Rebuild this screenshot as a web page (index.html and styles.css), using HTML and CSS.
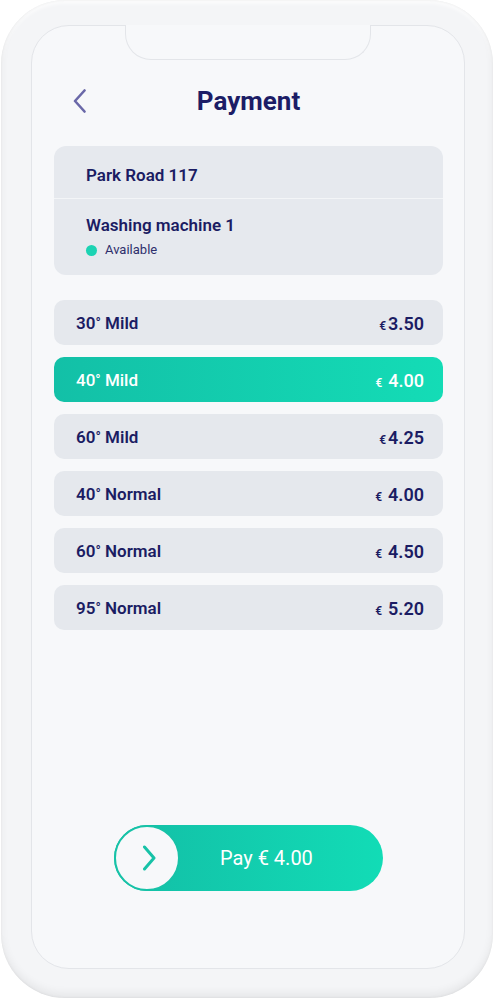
FILE: index.html
```html
<!DOCTYPE html>
<html lang="en">
<head>
<meta charset="utf-8">
<title>Payment</title>
<link rel="stylesheet" href="styles.css">
</head>
<body>
<div class="phone">
  <div class="screen">
    <div class="notch"></div>
    <header class="header">
      <div class="back">
        <svg width="14" height="24" viewBox="0 0 14 24"><path d="M11.5 1.5 L2 12 L11.5 22.5" fill="none" stroke="#6a68a8" stroke-width="2.6" stroke-linecap="round" stroke-linejoin="round"/></svg>
      </div>
      <h1 class="title">Payment</h1>
      <div></div>
    </header>

    <section class="info-card">
      <div class="info-row info-location">Park Road 117</div>
      <div class="info-row info-machine">
        <div class="machine-name">Washing machine 1</div>
        <div class="status"><span class="status-dot"></span>Available</div>
      </div>
    </section>

    <ul class="options">
      <li class="option"><span class="opt-name">30<span class="deg">°</span> Mild</span><span class="opt-price"><span class="eur tight">€</span>3.50</span></li>
      <li class="option selected"><span class="opt-name">40<span class="deg">°</span> Mild</span><span class="opt-price"><span class="eur">€</span>4.00</span></li>
      <li class="option"><span class="opt-name">60<span class="deg">°</span> Mild</span><span class="opt-price"><span class="eur tight">€</span>4.25</span></li>
      <li class="option"><span class="opt-name">40<span class="deg">°</span> Normal</span><span class="opt-price"><span class="eur">€</span>4.00</span></li>
      <li class="option"><span class="opt-name">60<span class="deg">°</span> Normal</span><span class="opt-price"><span class="eur">€</span>4.50</span></li>
      <li class="option"><span class="opt-name">95<span class="deg">°</span> Normal</span><span class="opt-price"><span class="eur">€</span>5.20</span></li>
    </ul>

    <div class="pay">
      <div class="pay-knob">
        <svg width="14" height="26" viewBox="0 0 14 26"><path d="M2.5 2 L12 13 L2.5 24" fill="none" stroke="#17c2a7" stroke-width="3" stroke-linecap="round" stroke-linejoin="round"/></svg>
      </div>
      <span class="pay-label">Pay € 4.00</span>
    </div>
  </div>
</div>
</body>
</html>
```

FILE: styles.css
```css
* { box-sizing: border-box; }

html, body {
  margin: 0;
  padding: 0;
  background: #ffffff;
}

body {
  font-family: Roboto, "Liberation Sans", Arial, sans-serif;
  color: #1b1c63;
}

.phone {
  width: 492px;
  height: 998px;
  margin-left: 1px;
  padding: 25px 28px 29px 30px;
  border-radius: 64px;
  background: #f4f5f7;
  box-shadow:
    inset 0 -5px 8px rgba(0, 0, 0, 0.06),
    inset 0 0 3px rgba(0, 0, 0, 0.08),
    inset 0 3px 4px rgba(255, 255, 255, 0.9);
}

.screen {
  position: relative;
  width: 434px;
  height: 944px;
  border: 1px solid #e3e5e9;
  border-radius: 38px;
  background: #f7f8fa;
  padding: 0 21px 77px 22px;
  display: flex;
  flex-direction: column;
}

.notch {
  position: absolute;
  top: -1px;
  left: 93px;
  width: 246px;
  height: 35px;
  background: #f7f8fa;
  border: 1px solid #e3e5e9;
  border-top: none;
  border-radius: 0 0 26px 26px;
}

.header {
  margin-top: 50px;
  height: 50px;
  display: grid;
  grid-template-columns: 1fr auto 1fr;
  align-items: center;
}

.back {
  margin-left: 19px;
  display: flex;
  align-items: center;
}

.title {
  margin: 0;
  font-size: 26px;
  font-weight: 700;
  line-height: 50px;
  color: #1c1d66;
}

.info-card {
  margin-top: 20px;
  background: #e6e9ee;
  border-radius: 12px;
  overflow: hidden;
}

.info-row {
  padding-left: 32px;
}

.info-location {
  height: 53px;
  padding-top: 5px;
  display: flex;
  align-items: center;
  font-size: 17px;
  font-weight: 600;
  border-bottom: 1px solid #f3f5f7;
}

.info-machine {
  height: 76px;
  padding-top: 15px;
}

.machine-name {
  font-size: 17px;
  font-weight: 600;
  line-height: 22px;
}

.status {
  margin-top: 5px;
  display: flex;
  align-items: center;
  font-size: 13px;
  line-height: 18px;
  color: #2e2f6c;
}

.status-dot {
  width: 11px;
  height: 11px;
  border-radius: 50%;
  background: #1cd3b3;
  margin-right: 8px;
}

.options {
  list-style: none;
  margin: 25px 0 0;
  padding: 0;
  display: flex;
  flex-direction: column;
  gap: 12px;
}

.option {
  height: 45px;
  padding: 1px 19px 0 22px;
  border-radius: 10px;
  background: #e5e8ed;
  display: flex;
  align-items: center;
  justify-content: space-between;
  font-size: 17px;
  font-weight: 600;
  color: #1b1c63;
}

.option.selected {
  background: linear-gradient(90deg, #13c0a7 0%, #14dcb6 100%);
  color: #ffffff;
  font-weight: 500;
}

.deg {
  font-size: 14px;
  position: relative;
  top: -1px;
}

.opt-price {
  font-size: 18px;
  display: flex;
  align-items: baseline;
}

.eur {
  font-size: 12px;
  margin-right: 6px;
}

.eur.tight {
  margin-right: 2px;
}

.pay {
  margin: auto auto 0;
  width: 269px;
  height: 66px;
  border-radius: 33px;
  background: linear-gradient(90deg, #13bea6 0%, #12dcb6 100%);
  display: flex;
  align-items: center;
}

.pay-knob {
  width: 66px;
  height: 66px;
  border-radius: 50%;
  background: #f7f8fa;
  border: 2px solid #17c2a7;
  display: flex;
  align-items: center;
  justify-content: center;
  padding-left: 3px;
}

.pay-label {
  margin-left: 40px;
  font-size: 20px;
  font-weight: 400;
  color: #ffffff;
}
```
